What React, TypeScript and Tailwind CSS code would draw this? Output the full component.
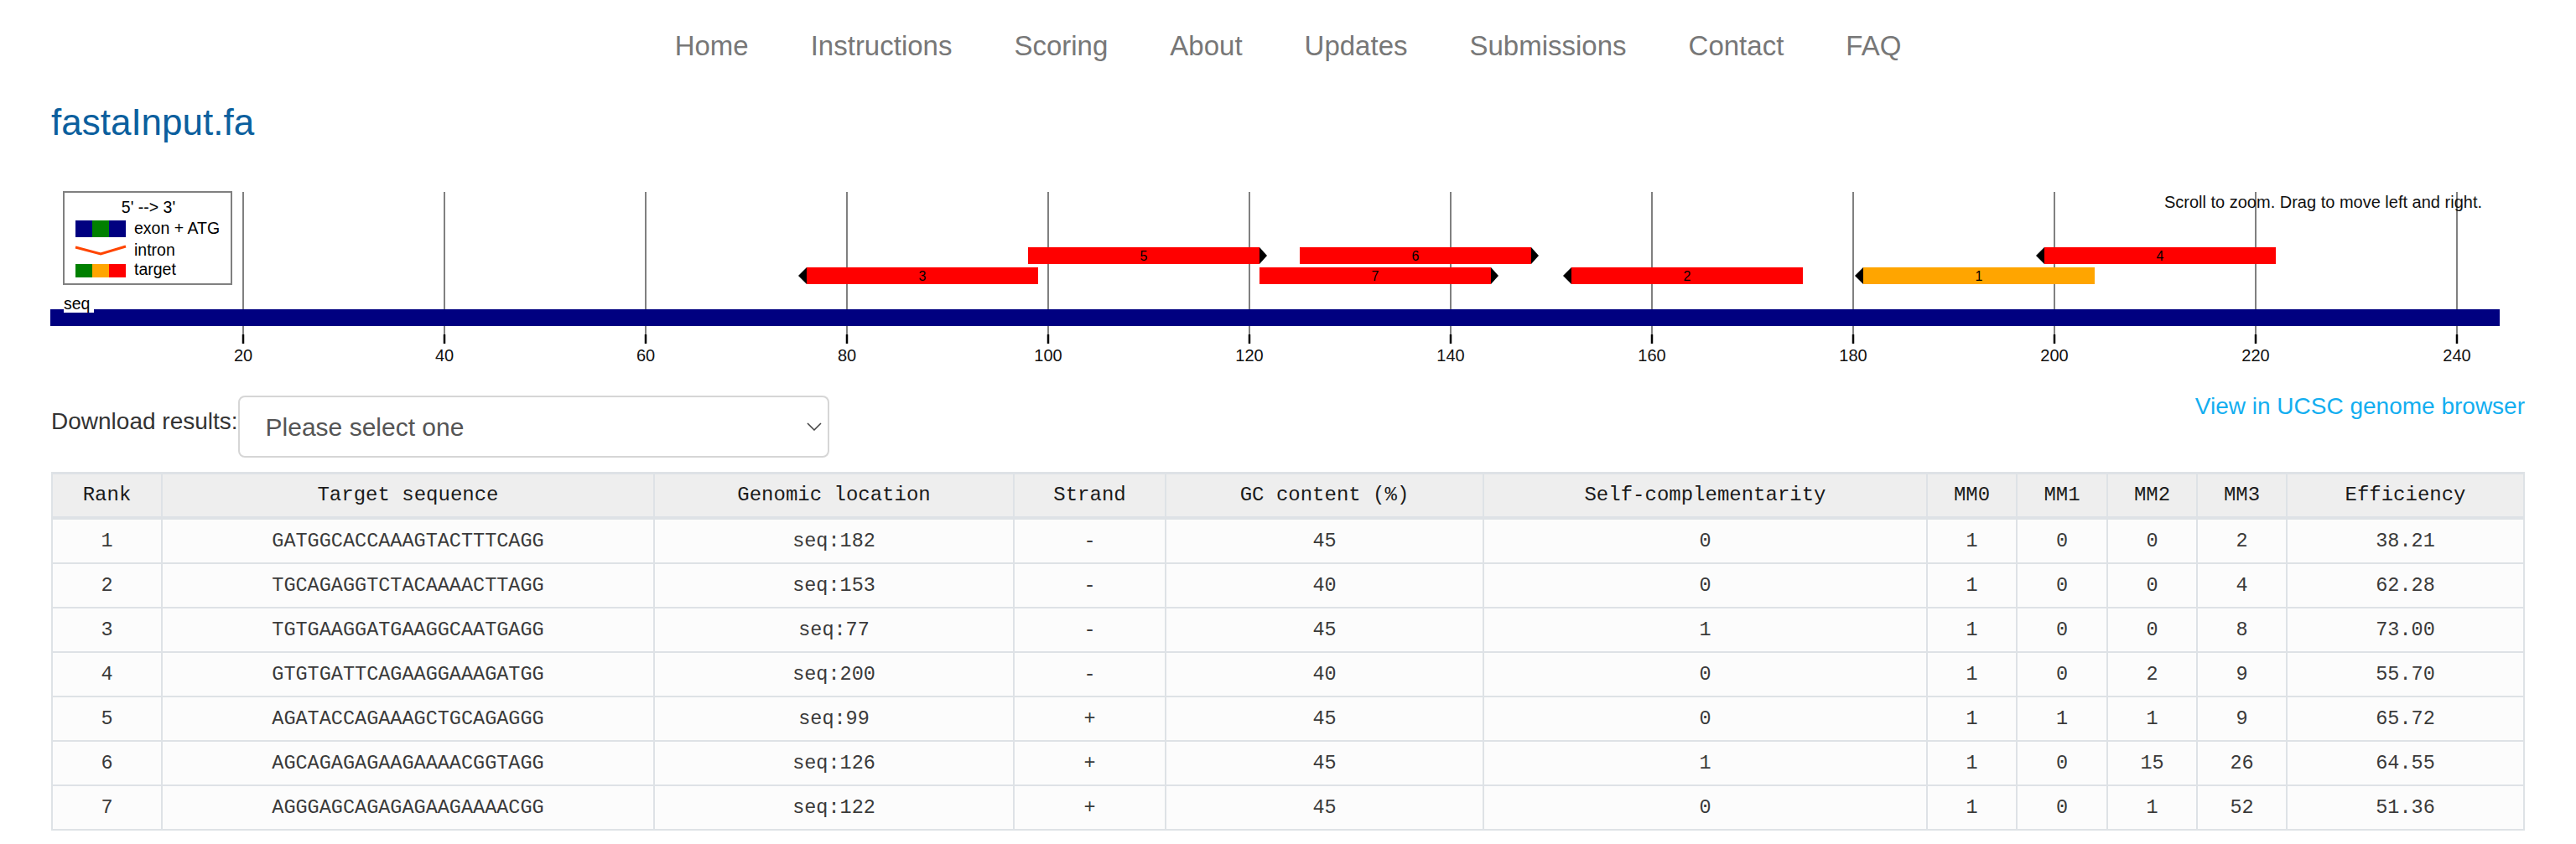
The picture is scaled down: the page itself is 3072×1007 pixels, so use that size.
import React from 'react';

type Target = {
  rank: number;
  seq: string;
  loc: number;
  strand: '+' | '-';
  gc: number;
  self: number;
  mm: number[];
  eff: string;
  lane: number;
};

const navItems = ['Home', 'Instructions', 'Scoring', 'About', 'Updates', 'Submissions', 'Contact', 'FAQ'];

const targets: Target[] = [
  { rank: 1, seq: 'GATGGCACCAAAGTACTTTCAGG', loc: 182, strand: '-', gc: 45, self: 0, mm: [1, 0, 0, 2], eff: '38.21', lane: 1 },
  { rank: 2, seq: 'TGCAGAGGTCTACAAAACTTAGG', loc: 153, strand: '-', gc: 40, self: 0, mm: [1, 0, 0, 4], eff: '62.28', lane: 1 },
  { rank: 3, seq: 'TGTGAAGGATGAAGGCAATGAGG', loc: 77, strand: '-', gc: 45, self: 1, mm: [1, 0, 0, 8], eff: '73.00', lane: 1 },
  { rank: 4, seq: 'GTGTGATTCAGAAGGAAAGATGG', loc: 200, strand: '-', gc: 40, self: 0, mm: [1, 0, 2, 9], eff: '55.70', lane: 0 },
  { rank: 5, seq: 'AGATACCAGAAAGCTGCAGAGGG', loc: 99, strand: '+', gc: 45, self: 0, mm: [1, 1, 1, 9], eff: '65.72', lane: 0 },
  { rank: 6, seq: 'AGCAGAGAGAAGAAAACGGTAGG', loc: 126, strand: '+', gc: 45, self: 1, mm: [1, 0, 15, 26], eff: '64.55', lane: 0 },
  { rank: 7, seq: 'AGGGAGCAGAGAGAAGAAAACGG', loc: 122, strand: '+', gc: 45, self: 0, mm: [1, 0, 1, 52], eff: '51.36', lane: 1 },
];

const columns = [
  { label: 'Rank', w: 'w-[131px]' },
  { label: 'Target sequence', w: 'w-[587px]' },
  { label: 'Genomic location', w: 'w-[429px]' },
  { label: 'Strand', w: 'w-[181px]' },
  { label: 'GC content (%)', w: 'w-[379px]' },
  { label: 'Self-complementarity', w: 'w-[529px]' },
  { label: 'MM0', w: 'w-[107px]' },
  { label: 'MM1', w: 'w-[108px]' },
  { label: 'MM2', w: 'w-[107px]' },
  { label: 'MM3', w: 'w-[107px]' },
  { label: 'Efficiency', w: 'w-[283px]' },
];

// sequence position -> x on the page
const px = (p: number) => 50 + 12 * p;
const SANS = 'Liberation Sans, Arial, sans-serif';

const GenomeChart = () => {
  const ticks = [20, 40, 60, 80, 100, 120, 140, 160, 180, 200, 220, 240];
  return (
    <svg className="block mt-[30px]" width={3072} height={245} viewBox="0 200 3072 245" fontFamily={SANS}>
      {ticks.map((t) => (
        <g key={t}>
          <line x1={px(t)} y1={229} x2={px(t)} y2={400} stroke="#808080" strokeWidth={2} />
          <line x1={px(t)} y1={399} x2={px(t)} y2={410} stroke="#000" strokeWidth={2.5} />
          <text x={px(t)} y={431} fontSize={20} textAnchor="middle" fill="#111">
            {t}
          </text>
        </g>
      ))}

      <text x={2960} y={248} fontSize={20} textAnchor="end" fill="#111">
        Scroll to zoom. Drag to move left and right.
      </text>

      {/* legend */}
      <rect x={76} y={229} width={200} height={110} fill="#fff" stroke="#808080" strokeWidth={2} />
      <text x={177} y={254} fontSize={19.5} textAnchor="middle" fill="#000">
        5' --&gt; 3'
      </text>
      <rect x={90} y={263} width={20} height={20} fill="#000080" />
      <rect x={110} y={263} width={20} height={20} fill="#008000" />
      <rect x={130} y={263} width={20} height={20} fill="#000080" />
      <text x={160} y={279} fontSize={19.5} fill="#000">exon + ATG</text>
      <polyline points="90,295 120,303 150,294" fill="none" stroke="#ff4500" strokeWidth={3} />
      <text x={160} y={305} fontSize={19.5} fill="#000">intron</text>
      <rect x={90} y={315} width={20} height={16} fill="#008000" />
      <rect x={110} y={315} width={20} height={16} fill="#ffa500" />
      <rect x={130} y={315} width={20} height={16} fill="#ff0000" />
      <text x={160} y={328} fontSize={19.5} fill="#000">target</text>

      {/* sequence bar */}
      <rect x={60} y={369} width={2921} height={20} fill="#000080" />
      <rect x={76} y={352} width={36} height={21} fill="#fff" />
      <text x={76} y={369} fontSize={19.5} fill="#000">seq</text>

      {/* targets */}
      {targets.map((t) => {
        const x0 = px(t.loc - 1);
        const x1 = x0 + 276;
        const y = t.lane === 0 ? 295 : 319;
        const fill = t.rank === 1 ? '#ffa500' : '#ff0000';
        return (
          <g key={t.rank}>
            <rect x={x0} y={y} width={276} height={20} fill={fill} />
            {t.strand === '-' ? (
              <polygon points={`${x0 - 10},${y + 10} ${x0},${y} ${x0},${y + 20}`} fill="#000" />
            ) : (
              <polygon points={`${x1},${y} ${x1 + 9},${y + 10} ${x1},${y + 20}`} fill="#000" />
            )}
            <text x={(x0 + x1) / 2} y={y + 16} fontSize={16} textAnchor="middle" fill="#000">
              {t.rank}
            </text>
          </g>
        );
      })}
    </svg>
  );
};

const td = 'h-[53px] border-r-2 border-b-2 border-[#dee2e6] bg-[#fcfcfc] text-center p-0';

export default function App() {
  return (
    <div className="w-[3072px] min-h-[1007px] bg-white font-['Liberation_Sans',Arial,sans-serif]">
      <nav className="flex justify-center gap-[74px] pt-[36px] h-[74px] text-[33px] leading-[38px] text-[#777]">
        {navItems.map((n) => (
          <a key={n} href="#" className="block">
            {n}
          </a>
        ))}
      </nav>

      <div className="px-[61px]">
        <h3 className="mt-[48px] text-[44px] leading-[48px] text-[#0b5f9e]">fastaInput.fa</h3>
      </div>

      <GenomeChart />

      <div className="px-[61px]">
        <div className="mt-[27px] flex justify-between items-start">
          <div className="flex items-start">
            <span className="mt-[11px] text-[28px] leading-[40px] text-[#333]">Download results:</span>
            <div className="w-[705px] h-[74px] border-2 border-[#d6d6d6] rounded-[8px] bg-white flex items-center justify-between pl-[31px] pr-[7px] text-[30px] text-[#555]">
              <span>Please select one</span>
              <svg width="18" height="10" viewBox="0 0 18 10">
                <polyline points="1,1 9,9 17,1" fill="none" stroke="#444" strokeWidth={1.5} />
              </svg>
            </div>
          </div>
          <a href="#" className="text-[28px] leading-[26px] text-[#13aef0]">
            View in UCSC genome browser
          </a>
        </div>

        <table className="mt-[17px] w-[2950px] table-fixed border-separate border-spacing-0 border-l-2 border-t-[3px] border-[#dee2e6] font-['Liberation_Mono',monospace]">
          <thead>
            <tr>
              {columns.map((c) => (
                <th
                  key={c.label}
                  className={`${c.w} h-[54px] border-r-2 border-b-[4px] border-[#dee2e6] bg-[#eeeeee] text-center font-normal text-[24px] text-[#1a1a1a] p-0`}
                >
                  {c.label}
                </th>
              ))}
            </tr>
          </thead>
          <tbody className="text-[23.5px] text-[#3a3a3a]">
            {targets.map((t) => (
              <tr key={t.rank}>
                <td className={td}>{t.rank}</td>
                <td className={td}>{t.seq}</td>
                <td className={td}>seq:{t.loc}</td>
                <td className={td}>{t.strand}</td>
                <td className={td}>{t.gc}</td>
                <td className={td}>{t.self}</td>
                {t.mm.map((m, i) => (
                  <td key={i} className={td}>
                    {m}
                  </td>
                ))}
                <td className={td}>{t.eff}</td>
              </tr>
            ))}
          </tbody>
        </table>
      </div>
    </div>
  );
}
